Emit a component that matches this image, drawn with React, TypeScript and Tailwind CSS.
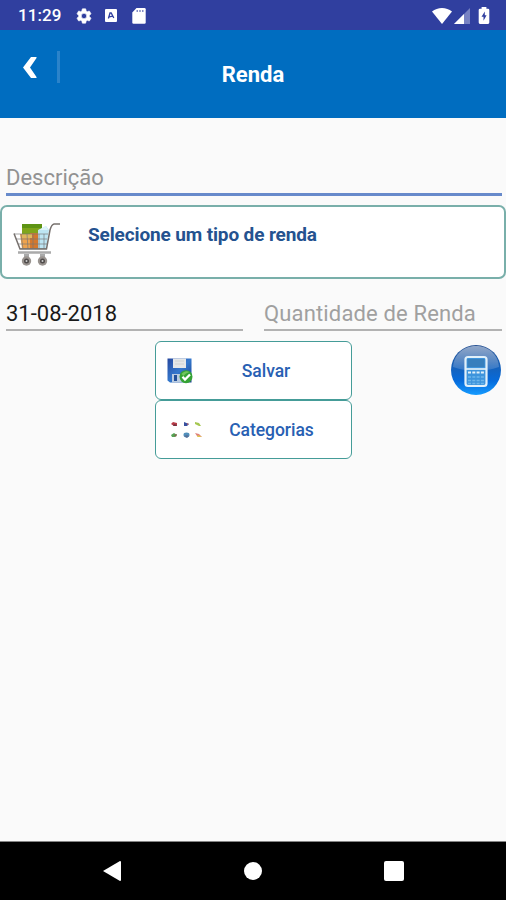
import React from 'react';

const SettingsIcon = () => (
  <svg width="18" height="18" viewBox="0 0 24 24" fill="white">
    <path
      fillRule="evenodd"
      stroke="white"
      strokeWidth=".8"
      d="M19.14 12.94a7 7 0 0 0 0-1.88l2.03-1.58a.5.5 0 0 0 .12-.61l-1.92-3.32a.5.5 0 0 0-.59-.22l-2.39.96a7 7 0 0 0-1.62-.94l-.36-2.54a.5.5 0 0 0-.48-.41h-3.84a.5.5 0 0 0-.47.41l-.36 2.54a7.4 7.4 0 0 0-1.62.94l-2.39-.96a.5.5 0 0 0-.59.22L2.74 8.87a.5.5 0 0 0 .12.61l2.03 1.58a7 7 0 0 0 0 1.88l-2.03 1.58a.5.5 0 0 0-.12.61l1.92 3.32c.12.22.37.29.59.22l2.39-.96c.5.38 1.03.7 1.62.94l.36 2.54c.05.24.24.41.48.41h3.84c.24 0 .44-.17.47-.41l.36-2.54a7.4 7.4 0 0 0 1.62-.94l2.39.96c.22.08.47 0 .59-.22l1.92-3.32a.5.5 0 0 0-.12-.61zM12 15.6a3.6 3.6 0 1 1 0-7.2 3.6 3.6 0 0 1 0 7.2z"
    />
  </svg>
);

const NotificationIcon = () => (
  <svg width="12" height="13" viewBox="0 0 12 13">
    <rect width="12" height="13" rx="1" fill="white" />
    <path d="M3.4 9.5 5 4h1.2l2.6 5M4.2 7.8l3.6-.6" fill="none" stroke="#303f9f" strokeWidth="1.3" />
  </svg>
);

const SdCardIcon = () => (
  <svg width="14" height="16" viewBox="0 0 14 16">
    <path d="M4.5 0H12.5a1.2 1.2 0 0 1 1.2 1.2v13.3a1.2 1.2 0 0 1-1.2 1.2h-11A1.2 1.2 0 0 1 .3 14.5V4.5z" fill="white" />
    <path d="M5.2 2v2M8 2v2M10.8 2v2" stroke="#303f9f" strokeOpacity=".75" strokeWidth="1.2" />
  </svg>
);

const WifiIcon = () => (
  <svg width="20" height="16" viewBox="0 0 20 16">
    <path d="M0 3.6C5.6-1.1 14.4-1.1 20 3.6L10 16z" fill="white" />
  </svg>
);

const SignalIcon = () => (
  <svg width="16" height="16" viewBox="0 0 16 16">
    <path d="M0 16 16 0v16z" fill="#7782c3" />
    <path d="M0 16 10 6v10z" fill="white" />
  </svg>
);

const BatteryIcon = () => (
  <svg width="12" height="17" viewBox="0 0 12 17">
    <path d="M3.6 0h4.8v1.8H10a1.3 1.3 0 0 1 1.3 1.3v12.5a1.3 1.3 0 0 1-1.3 1.3H2a1.3 1.3 0 0 1-1.3-1.3V3.1A1.3 1.3 0 0 1 2 1.8h1.6z" fill="white" />
    <path d="M6.8 4.6 3.5 9.8h2v4l3.1-5.5H6.8z" fill="#303f9f" />
  </svg>
);

const CartIcon = () => (
  <svg width="48" height="46" viewBox="0 0 48 46">
    <path d="M9 2h20v25H9z" fill="#7fa51c" />
    <path d="M9 2h20v4H9z" fill="#5e9414" />
    <path d="m25 8 8-4 3 4-3 19h-8z" fill="#bde5f3" />
    <path d="m26 8 7-4 2 4z" fill="#dff4fa" />
    <path d="M7 12h12v15H9z" fill="#efa34d" />
    <path d="M17 11h8v16h-8z" fill="#d4772d" />
    <path d="M9 12h10v4H9z" fill="#dfb75c" />
    <path d="M1 12h34M3 17h31M5 22h29M7 26.5h27M8 12l2 15M14 12l1 15M20 12v15M26 12v15M31 12v15" fill="none" stroke="#777" strokeOpacity=".65" strokeWidth="1" />
    <path d="M1 11.5 7 27h26.5L37 8q1.5-5.5 4-6h6" fill="none" stroke="#77716e" strokeWidth="1.5" />
    <path d="M5 30.5h33" stroke="#aaa" strokeWidth="2.4" />
    <path d="M13.5 32v5M29.5 32v5" stroke="#aaa" strokeWidth="5" />
    <circle cx="13.5" cy="39" r="4.7" fill="#99938f" />
    <circle cx="29.5" cy="39" r="4.7" fill="#99938f" />
    <circle cx="13.5" cy="39" r="2.5" fill="#4f4b4a" />
    <circle cx="29.5" cy="39" r="2.5" fill="#4f4b4a" />
    <circle cx="13.5" cy="39" r="1" fill="#ccc" />
    <circle cx="29.5" cy="39" r="1" fill="#ccc" />
  </svg>
);

const SaveIcon = () => (
  <svg width="26" height="26" viewBox="0 0 26 26">
    <defs>
      <linearGradient id="disk" x1="0" y1="0" x2="1" y2="1">
        <stop stopColor="#25479e" />
        <stop offset=".5" stopColor="#3478cd" />
        <stop offset="1" stopColor="#183f8d" />
      </linearGradient>
    </defs>
    <path d="M.5.5h24v24H3l-2.5-2z" fill="url(#disk)" />
    <path d="M6 .5h13v9.5H6z" fill="#e5e7e8" />
    <path d="M8 3h9M8 6h9" stroke="#cfd2d2" strokeWidth="1" />
    <path d="M5 16h13v8.5H5z" fill="#b9cbe0" />
    <path d="M7 17h3v6H7z" fill="#224f98" />
    <circle cx="19" cy="18.7" r="6.5" fill="#35a334" />
    <path d="M14.5 16a6 6 0 0 1 8-2q-4 1-6 4z" fill="#71c45c" />
    <path d="m15.5 18.8 2.5 2.7 5-5" fill="none" stroke="white" strokeWidth="2.3" />
  </svg>
);

const CategoriesIcon = () => (
  <svg width="34" height="18" viewBox="0 0 34 18">
    <path d="m1 3 2-2 4 1v3H4z" fill="#b83b47" />
    <path d="m4 3 3 1-1 1H3z" fill="#713342" />
    <path d="m14 1 5 2-2 2h-3z" fill="#364f9f" />
    <path d="m17 2 2 1-2 1z" fill="#b75e65" />
    <path d="m25 1 4 1 2 3h-2l-4-2z" fill="#a5c751" />
    <path d="m1 14 3-2 3 2-2 2H2z" fill="#55a354" />
    <path d="m4 14 3-1-1 3z" fill="#86624d" />
    <ellipse cx="16.5" cy="14" rx="3" ry="2.4" fill="#518fbb" />
    <path d="m14 15 3-1 2 1-2 2z" fill="#577099" />
    <path d="m25 12 4 1 3 3-5-1z" fill="#df817b" />
    <path d="m28 14 4 2h-5z" fill="#dec44d" />
  </svg>
);

const CalculatorIcon = () => (
  <svg width="52" height="52" viewBox="0 0 52 52">
    <defs>
      <linearGradient id="ball" x1="0" y1="0" x2="0" y2="1">
        <stop stopColor="#244f91" />
        <stop offset=".48" stopColor="#1463bf" />
        <stop offset=".72" stopColor="#066bdc" />
        <stop offset="1" stopColor="#159bff" />
      </linearGradient>
      <linearGradient id="gloss" x1="0" y1="0" x2="0" y2="1">
        <stop stopColor="white" stopOpacity=".5" />
        <stop offset="1" stopColor="white" stopOpacity=".12" />
      </linearGradient>
    </defs>
    <circle cx="26" cy="26" r="25" fill="url(#ball)" />
    <path d="M3 23C5-5 47-5 49 23Q26 31 3 23z" fill="url(#gloss)" />
    <rect x="15.5" y="13" width="21" height="29" rx="2.5" fill="#3e94dc" stroke="#e1f0fa" strokeWidth="2.2" />
    <path d="M17.5 15h17v8h-17z" fill="#377fbd" />
    <path d="M16 25h20" stroke="#e1f0fa" strokeWidth="1.7" />
    <path d="M18 28.5h16" stroke="#e1f0fa" strokeWidth="2.2" strokeDasharray="3 1.3" />
    <path d="M18 33h16M18 36.5h16M18 39.5h16" stroke="#6db6eb" strokeWidth="1.5" strokeDasharray="3 1.3" />
  </svg>
);

const StatusBar = () => (
  <div className="flex h-[30px] items-center justify-between bg-[#303f9f] pt-px pr-[16px] pl-[18px]">
    <div className="flex items-center">
      <span className="w-[57px] text-[17px] leading-none font-medium tracking-[0.1px] text-white">11:29</span>
      <SettingsIcon />
      <div className="ml-[12px]"><NotificationIcon /></div>
      <div className="ml-[15px]"><SdCardIcon /></div>
    </div>
    <div className="flex items-center">
      <WifiIcon />
      <div className="ml-[2px]"><SignalIcon /></div>
      <div className="ml-[8px]"><BatteryIcon /></div>
    </div>
  </div>
);

const Header = () => (
  <header className="grid h-[88px] grid-cols-[1fr_auto_1fr] bg-[#006dc0]">
    <div className="flex items-start pt-[21px] pl-[23px]">
      <button type="button" aria-label="Voltar" className="mt-[6px]">
        <svg width="14" height="22" viewBox="0 0 14 22">
          <path d="M8 0h5.5v1L7 10.5l6.5 9.5v1H8L0 10.5z" fill="white" />
        </svg>
      </button>
      <div className="ml-[20px] h-[32px] w-[3px] bg-[#2b83ca]" />
    </div>
    <h1 className="pt-[32px] text-[22px] leading-[26px] font-bold tracking-[0.05px] text-white">Renda</h1>
  </header>
);

interface ActionButtonProps {
  icon: React.ReactNode;
  label: string;
}

const ActionButton: React.FC<ActionButtonProps> = ({ icon, label }) => (
  <button type="button" className="flex h-[59px] items-center rounded-[6px] border-[1.5px] border-[#459c98] bg-white pr-[12px] pl-[11px]">
    {icon}
    <span className="flex-1 pt-px text-center text-[17.5px] font-medium tracking-[-0.05px] text-[#2860b3]">{label}</span>
  </button>
);

export default function App() {
  return (
    <div className="flex h-[900px] w-[506px] flex-col overflow-hidden bg-[#fafafa] font-['Roboto',sans-serif]">
      <StatusBar />
      <Header />
      <main className="flex-1">
        <div className="mr-[4px] ml-[6px] mt-[42px] h-[36px] border-b-[3px] border-[#678acb] pt-[5px] text-[22px] leading-[26px] text-[#929292]">
          Descrição
        </div>
        <button type="button" className="mt-[9px] flex h-[74px] w-full items-start rounded-[7px] border-2 border-[#79afaa] bg-white pt-[15px] pl-[11px] text-left">
          <CartIcon />
          <span className="ml-[27px] text-[19px] leading-[26px] font-bold tracking-[-0.13px] text-[#24528f]">Selecione um tipo de renda</span>
        </button>
        <div className="mr-[4px] ml-[6px] mt-[16px] flex justify-between text-[22px] leading-[26px]">
          <div className="h-[36px] w-[237px] border-b-2 border-[#b2b2b2] pt-[6px] text-[#191919]">31-08-2018</div>
          <div className="h-[36px] w-[238px] border-b-2 border-[#b2b2b2] pt-[6px] tracking-[0.15px] text-[#a0a0a0]">Quantidade de Renda</div>
        </div>
        <div className="mt-[10px] flex items-start justify-between pr-[4px] pl-[155px]">
          <div className="flex w-[197px] flex-col">
            <ActionButton icon={<SaveIcon />} label="Salvar" />
            <ActionButton icon={<span className="ml-[3px]"><CategoriesIcon /></span>} label="Categorias" />
          </div>
          <button type="button" aria-label="Calculadora" className="mt-[3px]"><CalculatorIcon /></button>
        </div>
      </main>
      <nav className="flex h-[59px] items-center justify-between border-t border-[#858585] bg-black px-[102px]">
        <svg width="20" height="22" viewBox="0 0 20 22">
          <path d="M1 11 18 1q1 0 1 1v18q0 1-1 1z" fill="white" />
        </svg>
        <div className="h-[18px] w-[18px] rounded-full bg-white" />
        <div className="h-[20px] w-[20px] rounded-[2px] bg-white" />
      </nav>
    </div>
  );
}
